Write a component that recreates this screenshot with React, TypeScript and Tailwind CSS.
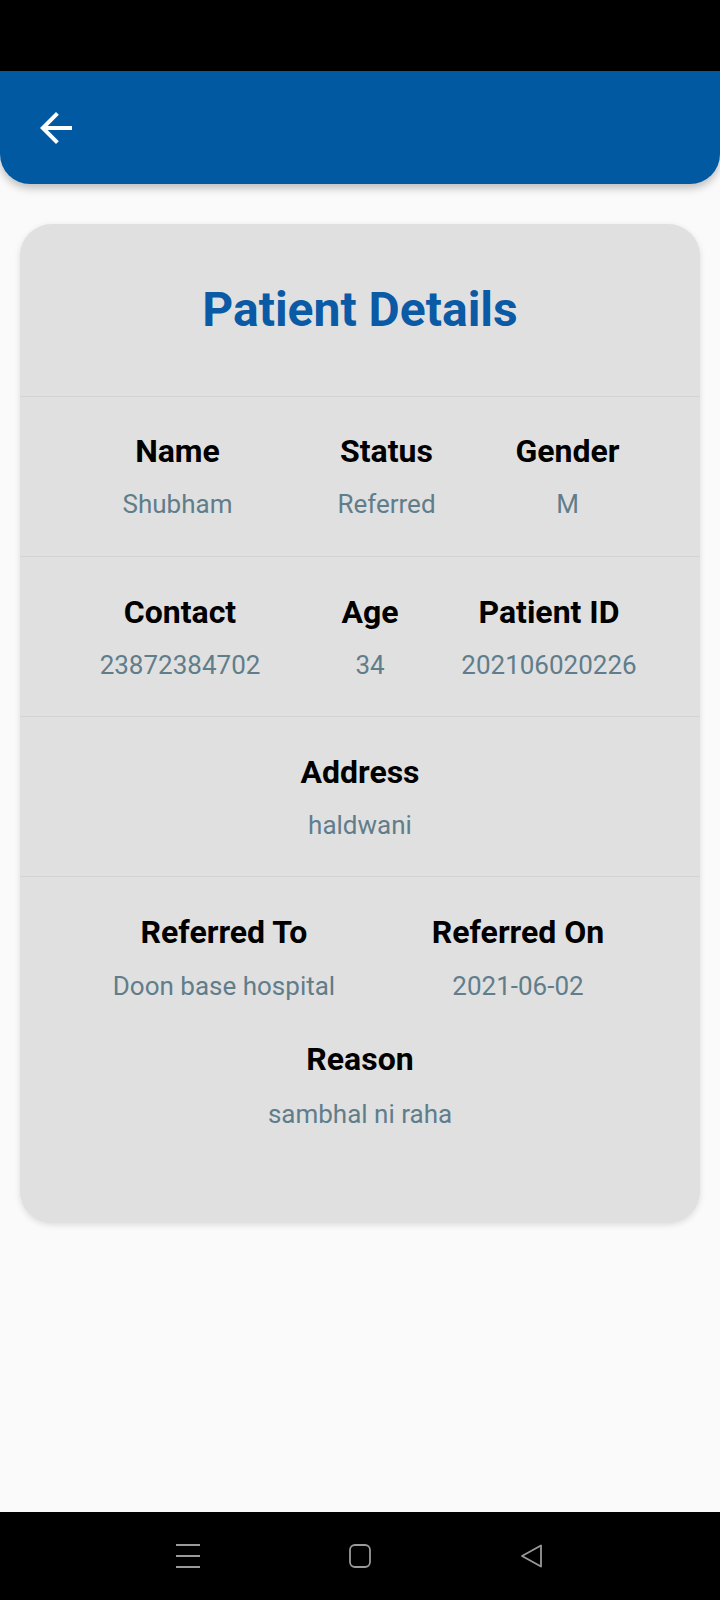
import React from "react";

type Field = { label: string; value: string };

function BackArrow(props: React.SVGProps<SVGSVGElement>) {
  return (
    <svg viewBox="0 0 24 24" fill="currentColor" {...props}>
      <path d="M20 11H7.83l5.59-5.59L12 4l-8 8 8 8 1.41-1.41L7.83 13H20v-2z" />
    </svg>
  );
}

function InfoCell({ label, value, gap = "mt-[18px]" }: Field & { gap?: string }) {
  return (
    <div className="flex flex-col items-center whitespace-nowrap">
      <span className="text-[32px] leading-[38px] font-bold text-black">{label}</span>
      <span className={`${gap} text-[26px] leading-[32px] text-[#607d8b]`}>{value}</span>
    </div>
  );
}

const rowOne: Field[] = [
  { label: "Name", value: "Shubham" },
  { label: "Status", value: "Referred" },
  { label: "Gender", value: "M" },
];

const rowTwo: Field[] = [
  { label: "Contact", value: "23872384702" },
  { label: "Age", value: "34" },
  { label: "Patient ID", value: "202106020226" },
];

export default function App() {
  return (
    <div className="w-[720px] h-[1600px] flex flex-col bg-[#fafafa] font-['Roboto',sans-serif] overflow-hidden">
      {/* status bar */}
      <div className="h-[71px] shrink-0 bg-black" />

      <header className="relative z-10 h-[113px] shrink-0 flex items-center pl-[32px] bg-[#0059a1] rounded-b-[30px] shadow-[0_4px_8px_rgba(0,0,0,0.25)]">
        <BackArrow className="w-[48px] h-[48px] text-white" />
      </header>

      <main className="flex-1 px-[20px] pt-[40px]">
        <div className="rounded-[32px] bg-[#e0e0e0] shadow-[0_2px_6px_rgba(0,0,0,0.12)] h-[999px]">
          <div className="pt-[58px] pb-[58px] flex justify-center">
            <h1 className="text-[48px] leading-[56px] font-bold text-[#0b5aa5]">Patient Details</h1>
          </div>

          <section className="border-t border-[#d3d3d3] pt-[35px] pb-[36px] grid grid-cols-[315px_103px_259px]">
            {rowOne.map((f) => (
              <InfoCell key={f.label} {...f} />
            ))}
          </section>

          <section className="border-t border-[#d3d3d3] pt-[36px] pb-[35px] grid grid-cols-[320px_60px_298px]">
            {rowTwo.map((f) => (
              <InfoCell key={f.label} {...f} />
            ))}
          </section>

          <section className="border-t border-[#d3d3d3] pt-[36px] pb-[35px] flex justify-center">
            <InfoCell label="Address" value="haldwani" />
          </section>

          <section className="border-t border-[#d3d3d3] pt-[36px] flex flex-col">
            <div className="grid grid-cols-[408px_180px]">
              <InfoCell label="Referred To" value="Doon base hospital" gap="mt-[19px]" />
              <InfoCell label="Referred On" value="2021-06-02" gap="mt-[19px]" />
            </div>
            <div className="mt-[38px] flex justify-center">
              <InfoCell label="Reason" value="sambhal ni raha" gap="mt-[20px]" />
            </div>
          </section>
        </div>
      </main>

      {/* system nav bar */}
      <nav className="h-[88px] shrink-0 bg-black flex items-center justify-center gap-[148px]">
        <svg viewBox="0 0 24 24" className="w-[24px] h-[24px] text-[#9a9a9a]" fill="none" stroke="currentColor" strokeWidth="2">
          <path d="M0 1h24M0 12h24M0 23h24" />
        </svg>
        <svg viewBox="0 0 24 24" className="w-[24px] h-[24px] text-[#9a9a9a]" fill="none" stroke="currentColor" strokeWidth="1.8">
          <rect x="2" y="1" width="20" height="22" rx="5" />
        </svg>
        <svg viewBox="0 0 24 24" className="w-[24px] h-[24px] text-[#9a9a9a]" fill="none" stroke="currentColor" strokeWidth="1.8" strokeLinejoin="round">
          <path d="M21 1.5v21L2 12z" />
        </svg>
      </nav>
    </div>
  );
}
